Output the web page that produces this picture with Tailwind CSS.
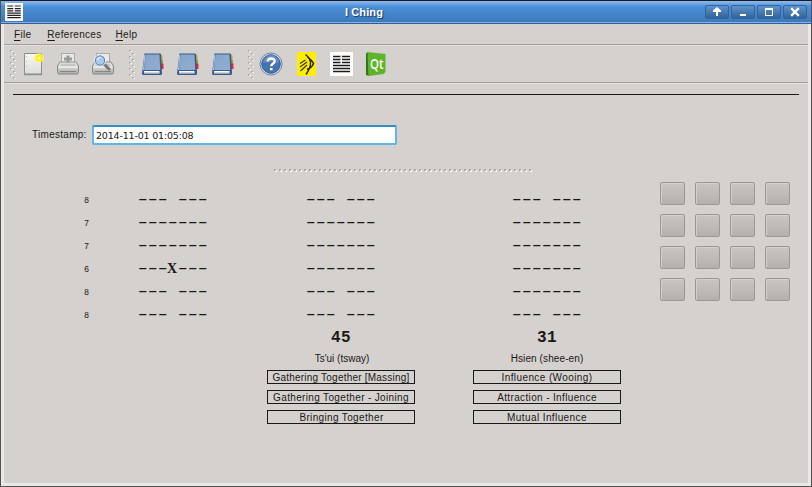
<!DOCTYPE html>
<html lang="en">
<head>
<meta charset="utf-8">
<title>I Ching</title>
<script src="https://cdn.jsdelivr.net/npm/@tailwindcss/browser@4"></script>
</head>
<body class="w-[812px] h-[487px] overflow-hidden bg-[#1e1e1e] font-['Liberation_Sans',sans-serif] text-[10px] leading-[12px] tracking-[0.22px] text-[#1b1818]">
<svg class="absolute size-0">
  <defs>
    <linearGradient id="cover" x1="0" y1="0" x2="1" y2="1"><stop offset="0" stop-color="#87a5cb"/><stop offset="1" stop-color="#90add1"/></linearGradient>
    <linearGradient id="paper" x1="0" y1="0" x2="0" y2="1"><stop offset="0" stop-color="#f7f7f6"/><stop offset="1" stop-color="#dcdcda"/></linearGradient>
    <linearGradient id="metal" x1="0" y1="0" x2="0" y2="1"><stop offset="0" stop-color="#f2f2f0"/><stop offset="1" stop-color="#aaaaa7"/></linearGradient>
    <pattern id="grip" width="6" height="6" patternUnits="userSpaceOnUse">
      <path d="M0 0h2v2H0zM3 3h2v2H3z" fill="#b3afac"/><path d="M1 1h2v1H1zM4 4h2v1H4z" fill="#f5f4f3"/>
    </pattern>
    <symbol id="book" viewBox="0 0 24 24">
      <path d="M18.500 3l2 1v17l-2 1z" fill="#4b6180"/>
      <path d="M20 2.500l1.500 1v6h-1.500z" fill="#c5a436"/><path d="M20 7.500l2 1v5h-2z" fill="#92a32f"/><path d="M20 11.500h2.500v5.500H20z" fill="#e9262f"/>
      <path d="M3.500 1.500h15.500q1 0 1 1l1 19q0 1.500-1.500 1.500H2.500q-1.500 0-1.500-1.500z" fill="#365b8c"/>
      <path d="M3 19h15.500v2.500H3z" fill="#fafafa"/><path d="M3 20.500h15.500" stroke="#b6b9bf" stroke-width=".6"/>
      <path d="M4.500 2.500h14l.700 15.500H3.200z" fill="url(#cover)"/>
      <path d="M3.800 3L2.500 18" stroke="#b6cbe5"/>
    </symbol>
    <symbol id="printer" viewBox="0 0 24 24">
      <path d="M5.500 1.500h13v12h-13z" fill="#e9e9e7" stroke="#a9a9a6"/>
      <path d="M4 10L1.500 14v6.500q0 1.500 1.500 1.500h18q1.500 0 1.500-1.500V14L20 10z" fill="url(#metal)" stroke="#888886"/>
      <path d="M5 11.500h14l1 3.500H4z" fill="#c5c5c2"/><path d="M2.500 15h19" stroke="#fff"/><path d="M4 19.500h16" stroke="#858583"/>
    </symbol>
    <symbol id="hexagram" viewBox="0 0 24 24">
      <path d="M0 0h24v24H0z" fill="#fff"/>
      <path d="M3 4h8M13 4h8M3 7.500h8M13 7.500h8M3 10.500h8M13 10.500h8M3 13.500h18M3 16.500h18M3 19.500h18" stroke="#222" stroke-width="1.600"/>
    </symbol>
  </defs>
</svg>
<div class="flex h-[487px] flex-col border border-[#55524f] border-t-[#1d1820]">
  <header class="flex h-[23px] shrink-0 items-center border-b border-[#335f94] bg-linear-to-b from-[#8ebcef] via-[#4c8fd7] via-25% to-[#3b78ba] pl-[4px] pr-[4px] shadow-[inset_0_-1px_#83b2e8]">
    <svg class="size-[18px]"><use href="#hexagram"/></svg>
    <h1 class="flex-1 text-center text-[11px] font-bold leading-[20px] tracking-[0.1px] text-white [text-shadow:1px_1px_1px_#183b68]">I Ching</h1>
    <div class="flex gap-[2px]">
      <svg class="h-[14px] w-[24px] rounded-[2px] border border-[#30649d] bg-linear-to-b from-[#5f93cb] to-[#32649a]" viewBox="0 0 22 12"><path d="M10 10V6H7V4.500L11 1l4 3.500V6h-3v4z" fill="#fff"/></svg>
      <svg class="h-[14px] w-[24px] rounded-[2px] border border-[#30649d] bg-linear-to-b from-[#5f93cb] to-[#32649a]" viewBox="0 0 22 12"><path d="M8 8h6v2H8z" fill="#fff"/></svg>
      <svg class="h-[14px] w-[24px] rounded-[2px] border border-[#30649d] bg-linear-to-b from-[#5f93cb] to-[#32649a]" viewBox="0 0 22 12"><path fill-rule="evenodd" d="M7 2h8v8H7zM8 4v5h6V4z" fill="#fff"/></svg>
      <svg class="h-[14px] w-[24px] rounded-[2px] border border-[#30649d] bg-linear-to-b from-[#5f93cb] to-[#32649a]" viewBox="0 0 22 12"><path d="M8 3l6 6M14 3L8 9" stroke="#fff" stroke-width="2.400" stroke-linecap="square"/></svg>
    </div>
  </header>
  <main class="flex min-h-0 flex-1 flex-col border-x-[3px] border-b-[3px] border-[#ebe9e7] bg-[#d5d1ce]">
    <nav class="flex h-[21px] shrink-0 items-center gap-[15px] border-b border-[#a29e9b] pl-[10px] pt-[2px] tracking-[0.3px]">
      <span><u class="underline-offset-2">F</u>ile</span><span class="ml-px"><u class="underline-offset-2">R</u>eferences</span><span class="-ml-px"><u class="underline-offset-2">H</u>elp</span>
    </nav>
    <div class="flex h-[38px] shrink-0 items-center border-t border-b border-t-[#e2dfdd] border-b-[#a29e9b] pl-[6px] shadow-[0_1px_#e2dfdd]">
      <svg class="h-[29px] w-[6px]"><rect width="6" height="29" fill="url(#grip)"/></svg>
      <svg class="ml-[5px] size-[24px]" viewBox="0 0 24 24"><path d="M3.500 1.500h17v20.500h-17z" fill="url(#paper)" stroke="#8d8d8a"/><path d="M3 22.700h18" stroke="#777" stroke-width=".8"/><path d="M5.500 4v1M5.500 9v1M5.500 14v1" stroke="#bbb"/><circle cx="18" cy="6" r="5" fill="#fff56a" opacity=".6"/><circle cx="18" cy="6" r="3.500" fill="#fff000"/><circle cx="18" cy="6" r="1.500" fill="#ffffc2"/></svg>
      <svg class="ml-[11px] size-[24px]" viewBox="0 0 24 24"><use href="#printer"/><path d="M10.500 3.500h3v2H16v3h-2.500v2h-3v-2H8v-3h2.500z" fill="#999"/></svg>
      <svg class="ml-[11px] size-[24px]" viewBox="0 0 24 24"><use href="#printer"/><path d="M13 12l5 5" stroke="#777" stroke-width="3" stroke-linecap="round"/><circle cx="9" cy="8.500" r="5" fill="#a9c8ee" stroke="#f1f4f8" stroke-width="2"/><circle cx="9" cy="8.500" r="4.600" fill="none" stroke="#5a86bd" stroke-width="1.200"/><path d="M6.500 8q.5-2.500 3-2.500" stroke="#fff" fill="none"/></svg>
      <svg class="ml-[14px] h-[29px] w-[6px]"><rect width="6" height="29" fill="url(#grip)"/></svg>
      <svg class="ml-[6px] size-[24px]"><use href="#book"/></svg>
      <svg class="ml-[11px] size-[24px]"><use href="#book"/></svg>
      <svg class="ml-[11px] size-[24px]"><use href="#book"/></svg>
      <svg class="ml-[13px] h-[29px] w-[6px]"><rect width="6" height="29" fill="url(#grip)"/></svg>
      <svg class="ml-[5px] size-[24px]" viewBox="0 0 24 24"><circle cx="12" cy="12" r="11" fill="#e9edf3" stroke="#6481a9"/><circle cx="12" cy="12" r="9.300" fill="#4573ad" stroke="#315c94"/><path d="M4 11a8 8 0 0 1 16 0q-8-2-16 0" fill="#799bc8" opacity=".6"/><path d="M8.700 9.500q0-3 3.500-3t3.400 2.800q0 1.500-1.700 2.500T12.200 14.300" fill="none" stroke="#fff" stroke-width="2.300"/><path d="M11 16h2.500v2.300H11z" fill="#fff"/></svg>
      <svg class="ml-[14px] h-[24px] w-[19px]" viewBox="0 0 19 24"><path d="M0 0h19v24H0z" fill="#ffee00"/><path d="M8.500 2.500Q13 6 13.500 10.500T9 22.500" fill="none" stroke="#28230b" stroke-width="1.400"/><path d="M10.500 5q4.500 3 6 6.500-1.500 4-6.500 6" fill="none" stroke="#28230b" stroke-width="1.500"/><path d="M3 11.500L8.500 8M3 15l7-5M3.500 19l6.500-6" stroke="#39330b" stroke-width="1.200"/></svg>
      <svg class="ml-[14px] h-[24px] w-[23px]" viewBox="0 0 23 24"><path d="M0 0h23v24H0z" fill="#fff"/><path d="M3 4.500h7.500M12 4.500h8M3 7.500h7.500M12 7.500h8M3 10.500h7.500M12 10.500h8M3 13.500h17M3 16.500h17M3 19.500h17" stroke="#1b1b1b" stroke-width="1.300"/></svg>
      <svg class="ml-[12px] h-[24px] w-[21px]" viewBox="0 0 21 24"><path d="M3 0L1 1.500V23l3 1z" fill="#347317"/><path d="M2.500 0L20.500 2v18l-2 2-15 2z" fill="#5eb52b"/><text x="5" y="17" font-family="Open Sans,sans-serif" font-size="15" font-weight="600" letter-spacing="0" fill="#fff" textLength="13.500" lengthAdjust="spacingAndGlyphs">Qt</text></svg>
    </div>
    <div class="ml-[9px] mr-[9px] mt-[11px] h-px shrink-0 bg-[#1b1818]"></div>
    <div class="mt-[30px] flex h-[20px] items-center pl-[28px]">
      <label for="ts" class="w-[60px] tracking-[0.28px]">Timestamp:</label>
      <input id="ts" value="2014-11-01 01:05:08" class="h-[20px] w-[305px] rounded-[2px] border-2 border-[#62b6e5] border-t-[#358dc1] bg-white pl-[2px] font-['DejaVu_Sans',sans-serif] text-[9.500px] tracking-[-0.180px] outline-none">
    </div>
    <svg class="ml-[270px] mt-[24px] h-[3px] w-[259px] shrink-0"><defs><pattern id="dots" width="5" height="3" patternUnits="userSpaceOnUse"><path d="M0 0h2v2H0z" fill="#aaa6a3"/><path d="M1 1h2v2H1z" fill="#f7f6f5"/><path d="M1 1h1v1H1z" fill="#c5c2bf"/></pattern></defs><rect width="259" height="3" fill="url(#dots)"/></svg>
    <div class="flex">
      <div class="mt-[18px] w-[131px] pl-[80px] font-['Liberation_Mono',monospace] text-[8.500px] leading-[23px]">
        <p>8</p><p>7</p><p>7</p><p>6</p><p>8</p><p>8</p>
      </div>
      <section class="mt-[16px] w-[132px] whitespace-pre font-['Liberation_Mono',monospace] text-[16.670px] leading-[23px] [&_.dash]:origin-left [&_.dash]:scale-x-[1.55] [&_.dash]:tracking-[-3.550px]"><p class="dash w-[70px]">--- ---</p><p class="dash w-[70px]">-------</p><p class="dash w-[70px]">-------</p><p class="flex w-[80px]"><span class="dash mr-[13px] w-[19px]">---</span><b class="w-[10px] text-center font-['Liberation_Serif',serif] text-[14px] tracking-[0]">X</b><span class="dash ml-[-2px] w-[19px]">---</span></p><p class="dash w-[70px]">--- ---</p><p class="dash w-[70px]">--- ---</p></section>
      <section class="mt-[16px] w-[148px] text-center">
        <div class="whitespace-pre pl-[36px] text-left font-['Liberation_Mono',monospace] text-[16.670px] leading-[23px] [&>p]:w-[70px] [&>p]:origin-left [&>p]:scale-x-[1.55] [&>p]:tracking-[-3.550px]"><p>--- ---</p><p>-------</p><p>-------</p><p>-------</p><p>--- ---</p><p>--- ---</p></div>
        <h2 class="mt-px font-['Liberation_Mono',monospace] text-[16px] font-bold leading-[22px] tracking-[0.4px]">45</h2>
        <p class="mt-[4px] pl-[2px] leading-[12px] tracking-[0]">Ts'ui (tsway)</p>
        <div class="mt-[5px] grid gap-[6px] [&>p]:h-[14px] [&>p]:whitespace-nowrap [&>p]:border [&>p]:border-[#1b1818] [&>p]:leading-[13px]"><p>Gathering Together [Massing]</p><p class="tracking-[0.35px]">Gathering Together - Joining</p><p class="pl-px tracking-[0.35px]">Bringing Together</p></div>
      </section>
      <section class="ml-[58px] mt-[16px] w-[148px] text-center">
        <div class="whitespace-pre pl-[36px] text-left font-['Liberation_Mono',monospace] text-[16.670px] leading-[23px] [&>p]:w-[70px] [&>p]:origin-left [&>p]:scale-x-[1.55] [&>p]:tracking-[-3.550px]"><p>--- ---</p><p>-------</p><p>-------</p><p>-------</p><p>-------</p><p>--- ---</p></div>
        <h2 class="mt-px font-['Liberation_Mono',monospace] text-[16px] font-bold leading-[22px] tracking-[0.4px]">31</h2>
        <p class="mt-[4px] leading-[12px] tracking-[0.1px]">Hsien (shee-en)</p>
        <div class="mt-[5px] grid gap-[6px] [&>p]:h-[14px] [&>p]:whitespace-nowrap [&>p]:border [&>p]:border-[#1b1818] [&>p]:leading-[13px]"><p class="tracking-[0.4px]">Influence (Wooing)</p><p class="tracking-[0.36px]">Attraction - Influence</p><p class="tracking-[0.4px]">Mutual Influence</p></div>
      </section>
      <div class="ml-[39px] mt-[10px] grid h-[119px] grid-cols-[repeat(4,25px)] gap-x-[10px] gap-y-[9px] [&>button]:h-[23px] [&>button]:rounded-[2px] [&>button]:border [&>button]:border-[#9b9793] [&>button]:bg-linear-to-b [&>button]:from-[#c9c5c2] [&>button]:to-[#b4b0ad] [&>button]:shadow-[inset_1px_1px_#d2cfcc]">
        <button></button><button></button><button></button><button></button>
        <button></button><button></button><button></button><button></button>
        <button></button><button></button><button></button><button></button>
        <button></button><button></button><button></button><button></button>
      </div>
    </div>
  </main>
</div>
</body>
</html>
